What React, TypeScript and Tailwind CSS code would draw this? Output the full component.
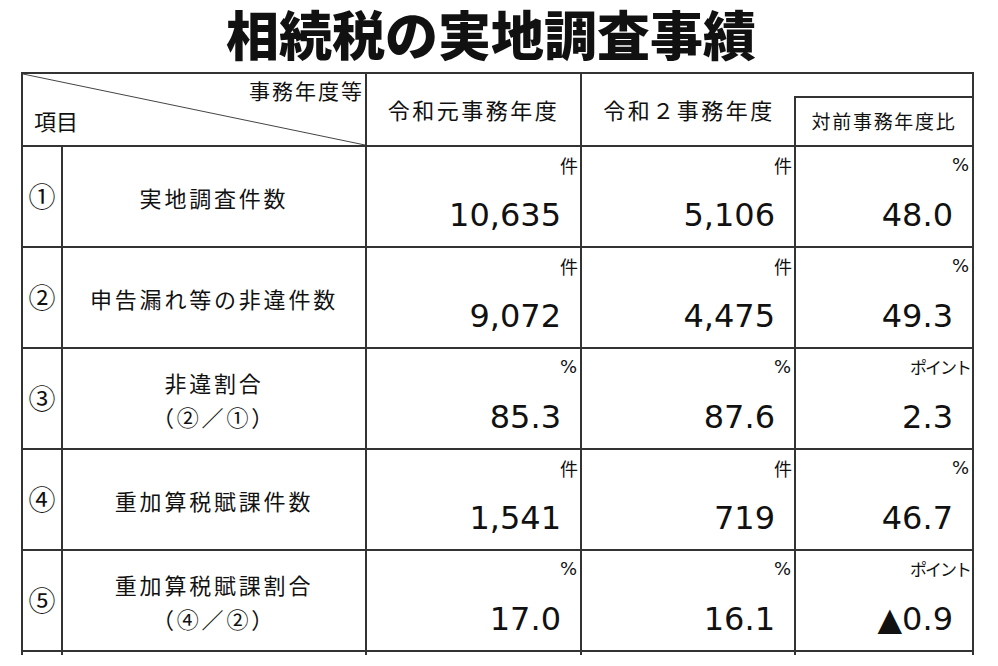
import { FC } from "react";

interface Row {
  no: string;
  label: string[];
  cells: { value: string; unit: string }[];
}

const rows: Row[] = [
  {
    no: "①",
    label: ["実地調査件数"],
    cells: [
      { value: "10,635", unit: "件" },
      { value: "5,106", unit: "件" },
      { value: "48.0", unit: "%" },
    ],
  },
  {
    no: "②",
    label: ["申告漏れ等の非違件数"],
    cells: [
      { value: "9,072", unit: "件" },
      { value: "4,475", unit: "件" },
      { value: "49.3", unit: "%" },
    ],
  },
  {
    no: "③",
    label: ["非違割合", "（②／①）"],
    cells: [
      { value: "85.3", unit: "%" },
      { value: "87.6", unit: "%" },
      { value: "2.3", unit: "ポイント" },
    ],
  },
  {
    no: "④",
    label: ["重加算税賦課件数"],
    cells: [
      { value: "1,541", unit: "件" },
      { value: "719", unit: "件" },
      { value: "46.7", unit: "%" },
    ],
  },
  {
    no: "⑤",
    label: ["重加算税賦課割合", "（④／②）"],
    cells: [
      { value: "17.0", unit: "%" },
      { value: "16.1", unit: "%" },
      { value: "▲0.9", unit: "ポイント" },
    ],
  },
];

const jp = "font-['Noto_Sans_CJK_JP',sans-serif]";
const num = "font-['DejaVu_Sans','Noto_Sans_CJK_JP',sans-serif]";

const Unit: FC<{ unit: string }> = ({ unit }) => {
  if (unit === "%") {
    return (
      <div className="pt-[6px] pr-[3px] text-right font-['DejaVu_Sans',sans-serif] text-[18px] leading-[24px]">
        %
      </div>
    );
  }
  if (unit === "ポイント") {
    return (
      <div className="pt-[6px] pr-[2px] text-right font-['Noto_Sans_CJK_JP',sans-serif] text-[17px] leading-[24px] tracking-[-2px]">
        ポイント
      </div>
    );
  }
  return (
    <div className="pt-[6px] pr-[2px] text-right font-['Noto_Sans_CJK_JP',sans-serif] text-[18px] leading-[24px]">
      {unit}
    </div>
  );
};

const DataCell: FC<{ value: string; unit: string }> = ({ value, unit }) => (
  <div className="flex h-[101px] flex-col border-r-2 border-b-2 border-[#333]">
    <Unit unit={unit} />
    <div className={`${num} mt-[20px] pr-[19px] text-right text-[32px] leading-[36px]`}>
      {value}
    </div>
  </div>
);

export default function App() {
  return (
    <div className={`${jp} min-h-[666px] w-[998px] bg-white text-[#111]`}>
      {/* タイトル */}
      <div className="flex h-[72px] items-start justify-center pr-[16px]">
        <h1 className="text-[53px] leading-[66px] font-black">相続税の実地調査事績</h1>
      </div>

      <div className="ml-[21px] grid w-[953px] grid-cols-[40px_304px_215px_214px_178px] border-t-2 border-l-2 border-[#333]">
        {/* 見出し */}
        <div className="relative col-span-2 flex h-[73px] flex-col justify-between border-r-2 border-b-2 border-[#333]">
          <svg className="absolute inset-0 h-full w-full" preserveAspectRatio="none" viewBox="0 0 100 100">
            <line x1="0" y1="0" x2="100" y2="100" stroke="#444" strokeWidth="1" vectorEffect="non-scaling-stroke" />
          </svg>
          <div className="pt-[4px] pr-[1px] text-right text-[21px] leading-[24px] tracking-[2px]">事務年度等</div>
          <div className="pb-[13px] pl-[11px] text-[22px] leading-[24px]">項目</div>
        </div>
        <div className="flex h-[73px] items-center justify-center border-r-2 border-b-2 border-[#333] text-[22px] tracking-[2.5px]">
          令和元事務年度
        </div>
        <div className="flex h-[73px] items-center justify-center border-b-2 border-[#333] text-[22px] tracking-[2.5px]">
          令和２事務年度
        </div>
        <div className="flex h-[73px] flex-col border-r-2 border-b-2 border-[#333] pt-[22px]">
          <div className="-ml-[2px] flex flex-1 items-center justify-center border-t-2 border-l-2 border-[#333] text-[19px] tracking-[1.7px]">
            対前事務年度比
          </div>
        </div>

        {/* 本体 */}
        {rows.map((row) => (
          <div key={row.no} className="contents">
            <div className="flex h-[101px] items-center justify-center border-r-2 border-b-2 border-[#333] text-[27px]">
              {row.no}
            </div>
            <div className="flex h-[101px] flex-col items-center justify-center border-r-2 border-b-2 border-[#333] text-[22px] leading-[34px] tracking-[2.8px]">
              {row.label.map((l) => (
                <div key={l}>{l}</div>
              ))}
            </div>
            {row.cells.map((c, i) => (
              <DataCell key={i} value={c.value} unit={c.unit} />
            ))}
          </div>
        ))}

        {/* 次の行の始まり */}
        <div className="h-[3px] border-r-2 border-[#333]" />
        <div className="h-[3px] border-r-2 border-[#333]" />
        <div className="h-[3px] border-r-2 border-[#333]" />
        <div className="h-[3px] border-r-2 border-[#333]" />
        <div className="h-[3px] border-r-2 border-[#333]" />
      </div>
    </div>
  );
}
